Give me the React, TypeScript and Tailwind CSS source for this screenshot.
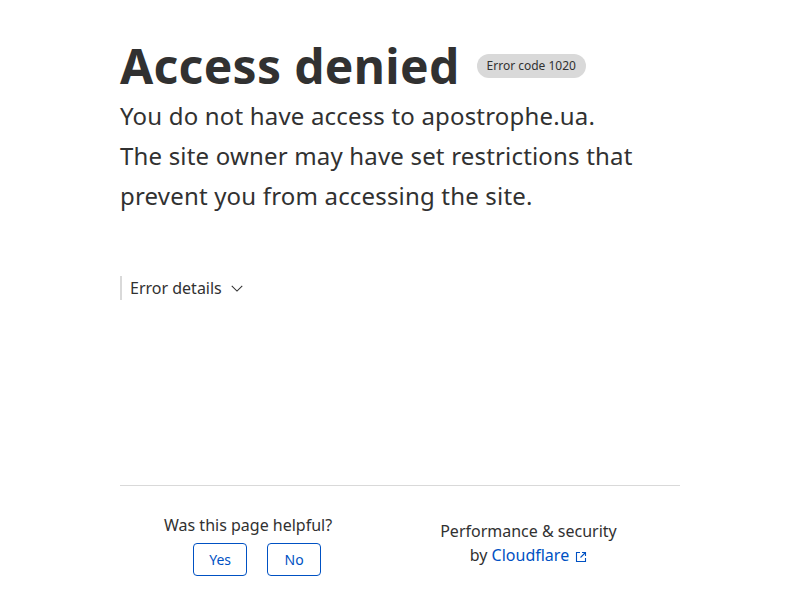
import React from "react";

function ChevronDown() {
  return (
    <svg width="14" height="14" viewBox="0 0 16 16" fill="none" className="ml-2">
      <path d="M2 5.5l6 6 6-6" stroke="#313131" strokeWidth="1.2" />
    </svg>
  );
}

function ExternalLink() {
  return (
    <svg width="12" height="12" viewBox="0 0 12 12" fill="none" className="ml-1.5 inline-block">
      <path d="M5 1.5H1.5v9h9V7" stroke="#0051c3" strokeWidth="1.1" />
      <path d="M7 1.5h3.5V5M10.5 1.5 5.5 6.5" stroke="#0051c3" strokeWidth="1.1" />
    </svg>
  );
}

export default function App() {
  return (
    <div className="min-h-screen bg-white text-[#313131] font-['Noto_Sans',sans-serif]">
      <main className="mx-auto w-[560px] pt-[36px]">
        <div className="flex items-center gap-[17px]">
          <h1 className="text-[48px] font-bold leading-[60px] tracking-[0.3px]">Access denied</h1>
          <span className="rounded-full bg-[#d9d9d9] px-2.5 py-1 text-xs leading-4">
            Error code 1020
          </span>
        </div>
        <p className="text-2xl leading-10 tracking-[0.18px]">
          You do not have access to apostrophe.ua.
          <br />
          The site owner may have set restrictions that prevent you from accessing the site.
        </p>
        <div className="mt-[60px] flex items-center border-l-2 border-[#d9d9d9] pl-2 text-base leading-6">
          Error details
          <ChevronDown />
        </div>
        <footer className="mt-[185px] border-t border-[#d9d9d9] pt-[27px] flex gap-[108px] pl-[44px] text-base">
          <div className="flex flex-col items-center">
            <p className="leading-6">Was this page helpful?</p>
            <div className="mt-1.5 ml-[18px] flex gap-5">
              <button className="h-[33px] w-[54px] rounded border border-[#0051c3] text-sm text-[#0051c3]">
                Yes
              </button>
              <button className="h-[33px] w-[54px] rounded border border-[#0051c3] text-sm text-[#0051c3]">
                No
              </button>
            </div>
          </div>
          <div className="flex flex-col items-center pt-[6px] leading-6">
            <p>Performance &amp; security</p>
            <p>
              by <span className="text-[#0051c3]">Cloudflare</span>
              <ExternalLink />
            </p>
          </div>
        </footer>
      </main>
    </div>
  );
}
